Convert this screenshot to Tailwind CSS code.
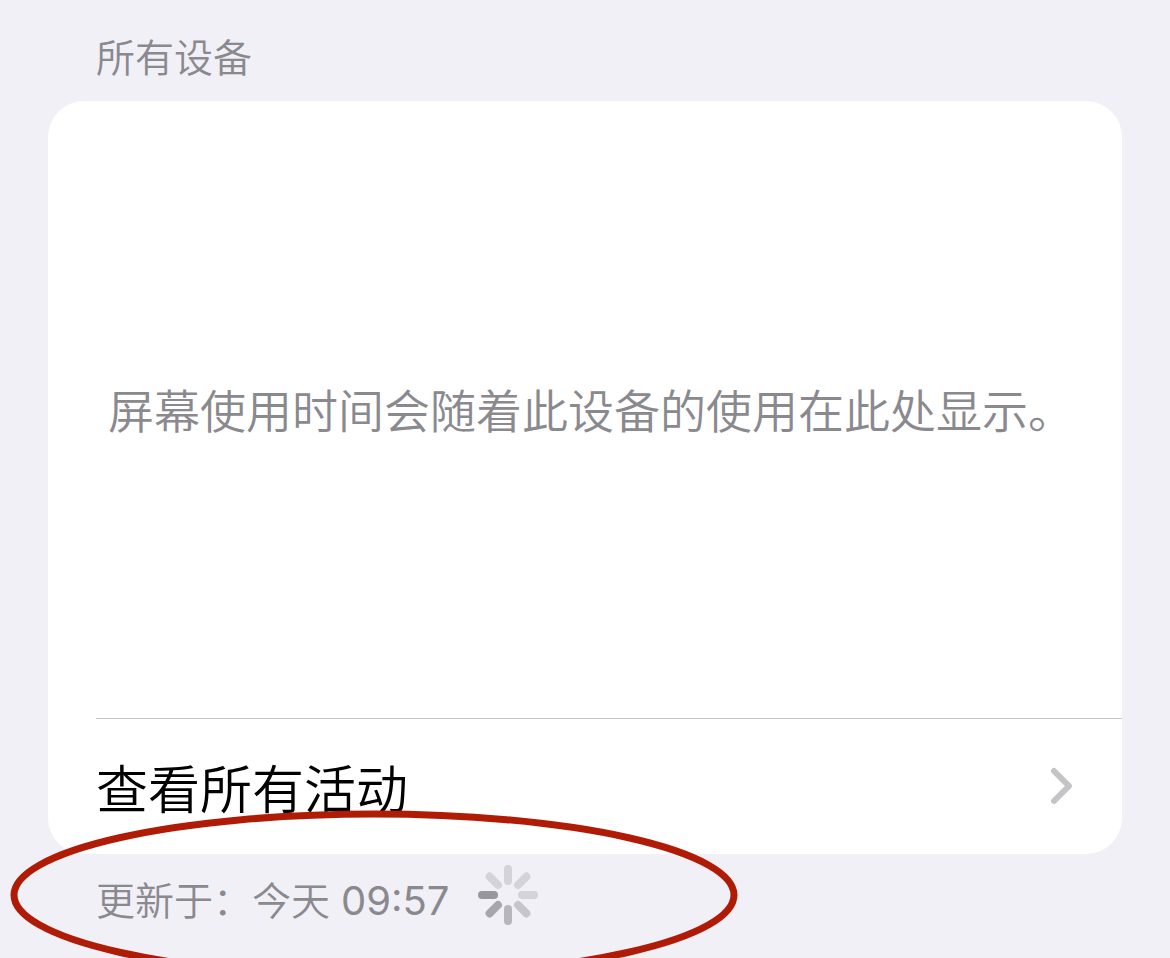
<!DOCTYPE html>
<html lang="zh-CN">
<head>
  <meta charset="UTF-8">
  <meta name="viewport" content="width=device-width, initial-scale=1.0">
  <title>屏幕使用时间</title>
  <script src="https://cdn.jsdelivr.net/npm/@tailwindcss/browser@4"></script>
</head>
<body class="min-h-screen overflow-hidden bg-[#f1f0f6] font-['Inter','Noto_Sans_CJK_SC',sans-serif] font-[350] text-[#8a898e]">
  <main class="relative px-12 pt-8">
    <h1 class="px-12 text-[39px] leading-[52px] font-[350]">所有设备</h1>

    <!-- Usage card -->
    <section class="mt-[17px] overflow-hidden rounded-[36px] bg-white">
      <div class="flex h-[617px] items-center justify-center pt-[2px] pl-3">
        <p class="text-[46px] leading-[60px] whitespace-nowrap">屏幕使用时间会随着此设备的使用在此处显示。</p>
      </div>
      <a href="#" class="ml-12 flex h-[136px] items-center justify-between border-t border-[#c6c6c8] pr-12 text-black">
        <span class="pt-2 text-[52px] leading-[68px]">查看所有活动</span>
        <svg class="h-10 w-6" viewBox="0 0 24 40" fill="none" stroke="#c4c4c6" stroke-width="6" stroke-linecap="round" stroke-linejoin="round">
          <path d="M4 4L19 19L4 34"/>
        </svg>
      </a>
    </section>

    <!-- Last update -->
    <footer class="flex items-start px-12 pt-[11px]">
      <p class="pt-[6px] text-[39px] leading-[60px]">更新于：今天 <time class="text-[40px] font-normal">09:57</time></p>
      <svg class="ml-7 size-[60px]" viewBox="0 0 60 60" stroke-width="8" stroke-linecap="round">
        <path stroke="#d4d3d9" d="M30 4V16"/>
        <path stroke="#d4d3d9" d="M48.4 11.6L40 20"/>
        <path stroke="#d4d3d9" d="M56 30H44"/>
        <path stroke="#c6c5cb" d="M48.4 48.4L40 40"/>
        <path stroke="#b7b6bc" d="M30 56V44"/>
        <path stroke="#a7a6ac" d="M11.6 48.4L20 40"/>
        <path stroke="#98979d" d="M4 30H16"/>
        <path stroke="#d4d3d9" d="M11.6 11.6L20 20"/>
      </svg>
    </footer>

    <!-- Hand-drawn highlight -->
    <svg class="pointer-events-none absolute top-[808px] left-[8px] h-[176px] w-[732px]" viewBox="0 0 732 176" fill="none" stroke="#b01b05" stroke-width="7">
      <ellipse cx="366" cy="87" rx="360" ry="81"/>
    </svg>
  </main>
</body>
</html>
